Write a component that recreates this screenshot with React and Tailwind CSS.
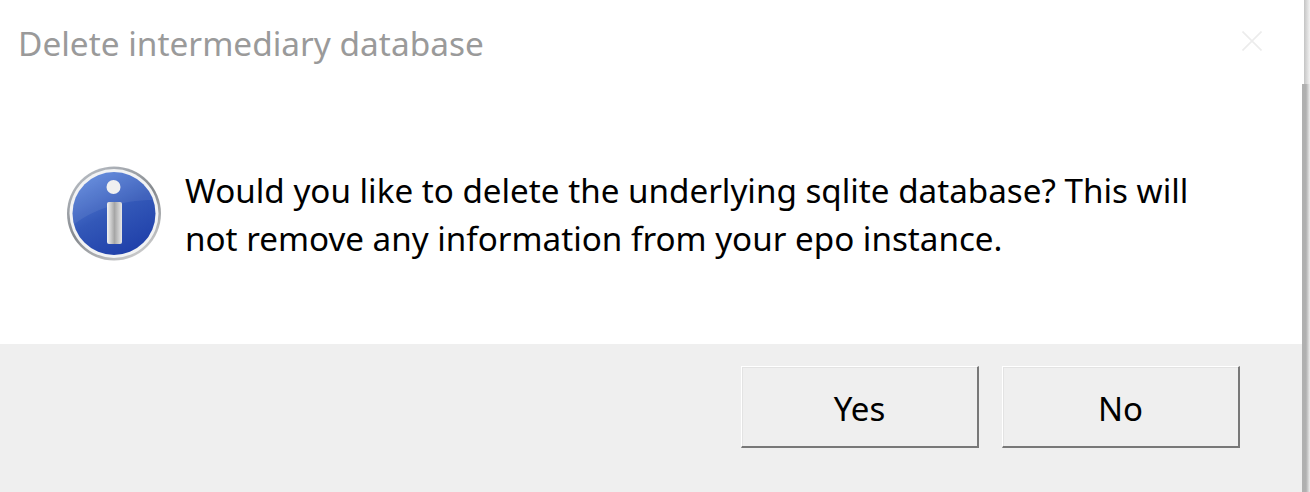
import { useState } from "react";

function InfoIcon() {
  return (
    <svg width="96" height="96" viewBox="0 0 96 96" className="shrink-0 blur-[0.5px]">
      <defs>
        <linearGradient id="ring" x1="0.2" y1="0" x2="0.8" y2="1">
          <stop offset="0" stopColor="#b9bec5" />
          <stop offset="0.5" stopColor="#85898e" />
          <stop offset="1" stopColor="#d2d2d2" />
        </linearGradient>
        <linearGradient id="disc" x1="0.2" y1="0" x2="0.7" y2="1">
          <stop offset="0" stopColor="#5f88dc" />
          <stop offset="0.5" stopColor="#3358b8" />
          <stop offset="1" stopColor="#1f3fa9" />
        </linearGradient>
        <linearGradient id="bar" x1="0" y1="0" x2="1" y2="0">
          <stop offset="0" stopColor="#f4f4f4" />
          <stop offset="0.5" stopColor="#a6a6a6" />
          <stop offset="1" stopColor="#e8e8e8" />
        </linearGradient>
      </defs>
      <circle cx="48" cy="47.5" r="47" fill="url(#ring)" />
      <circle cx="48" cy="47.5" r="44.5" fill="#f2f3f4" />
      <circle cx="48" cy="47.5" r="41.5" fill="url(#disc)" />
      <path d="M6.5 60 C24 44 56 34 88 34 C82 16 66 6 48 6 C25 6 6.5 24 6.5 47.5 Z" fill="#ffffff" opacity="0.07" />
      <circle cx="47.5" cy="21" r="7" fill="#f0f0f0" />
      <rect x="41" y="36" width="15" height="42" rx="2" fill="url(#bar)" />
    </svg>
  );
}

function DialogButton({ label }) {
  const [pressed, setPressed] = useState(false);
  return (
    <button
      onMouseDown={() => setPressed(true)}
      onMouseUp={() => setPressed(false)}
      className="h-[82px] w-[238px] border-t border-l border-r-2 border-b-2 border-t-white border-l-white border-r-[#787878] border-b-[#787878] bg-[#efefef] pt-[3px] text-[33px] leading-none text-black shadow-[inset_1px_1px_0_#e3e3e3]"
    >
      {label}
    </button>
  );
}

export default function App() {
  return (
    <div className="flex h-[492px] w-[1310px] overflow-hidden bg-white font-['Noto_Sans','Open_Sans',sans-serif]">
      <div className="flex w-[1302px] shrink-0 flex-col">
        <div className="flex h-[84px] items-start justify-between pl-[18px] pr-[40px] pt-[19px]">
          <h1 className="text-[33.4px] leading-[48px] text-[#9a9a9a]">Delete intermediary database</h1>
          <svg width="20" height="20" viewBox="0 0 20 20" className="mt-[12px]">
            <path d="M0.5 0.5 L19.5 19.5 M19.5 0.5 L0.5 19.5" stroke="#ececec" strokeWidth="1.6" />
          </svg>
        </div>
        <div className="flex h-[260px] items-start gap-[23px] pl-[66px] pt-[82px]">
          <InfoIcon />
          <p className="w-[1040px] pt-px text-[33.2px] leading-[48px] text-black">
            Would you like to delete the underlying sqlite database? This will not remove any information from your epo instance.
          </p>
        </div>
        <div className="flex flex-1 items-start justify-end gap-[23px] bg-[#efefef] pr-[62px] pt-[22px]">
          <DialogButton label="Yes" />
          <DialogButton label="No" />
        </div>
      </div>
      <div className="flex w-[8px] shrink-0 flex-col">
        <div className="flex h-[84px] shrink-0">
          <div className="w-[2px] bg-white" />
          <div className="flex-1 bg-gradient-to-r from-[#c4c4c4] to-[#f2f2f2]" />
        </div>
        <div className="flex-1 bg-gradient-to-r from-[#b0b0b0] via-[#b0b0b0] to-[#eeeeee]" />
      </div>
    </div>
  );
}
